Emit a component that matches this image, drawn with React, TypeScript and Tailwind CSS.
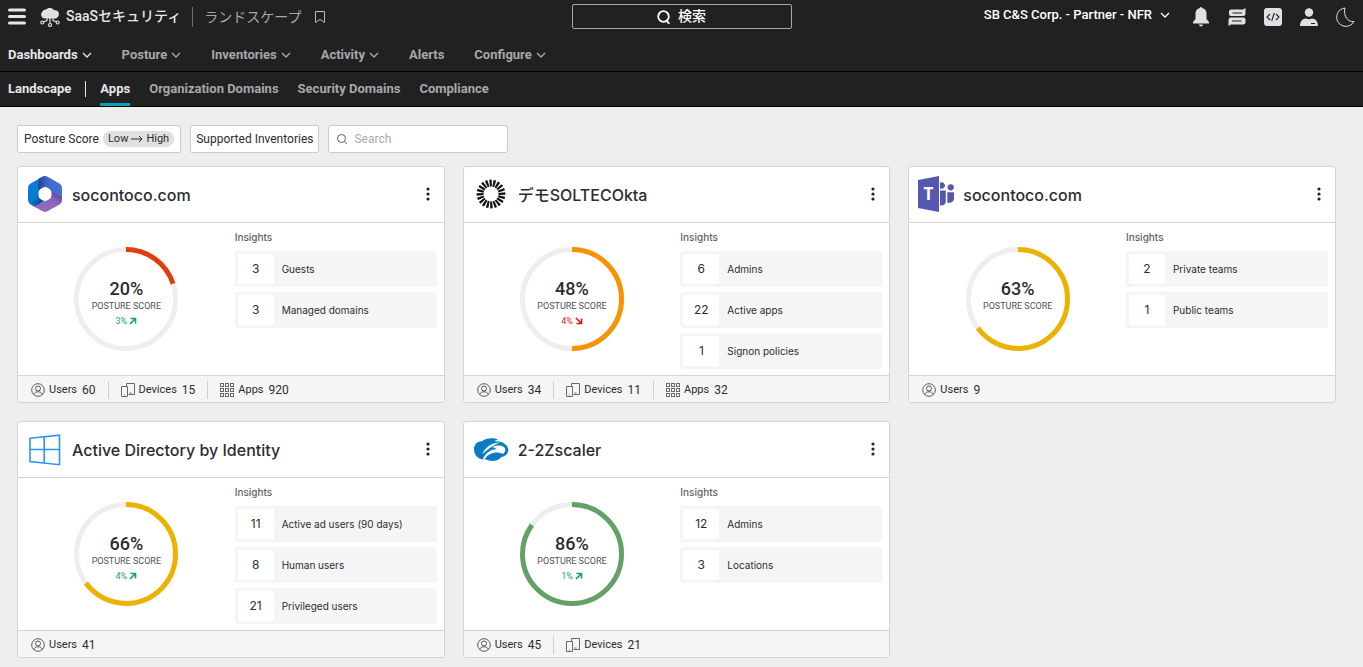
import React from "react";

type Insight = { value: number; label: string };
type Trend = { value: string; up: boolean };
type Stat = { kind: "Users" | "Devices" | "Apps"; value: number };
type CardData = {
  title: string;
  logo: React.ReactNode;
  score: number;
  color: string;
  trend?: Trend;
  insights: Insight[];
  stats: Stat[];
};

const M365Logo = () => (
  <svg viewBox="0 0 36 36" className="size-9">
    <defs>
      <clipPath id="hex">
        <path d="M15 .9c2-1.100 4-1.100 6 0L32 7.200c2 1.100 3 2.800 3 5v11.600c0 2.200-1 3.900-3 5L21 35.100c-2 1.100-4 1.100-6 0L4 28.800c-2-1.100-3-2.800-3-5V12.200c0-2.200 1-3.900 3-5z" />
      </clipPath>
      <linearGradient id="left" x1="0.7" y1="1" x2="0.3" y2="0.4">
        <stop offset="0" stopColor="#0c3f83" />
        <stop offset="0.6" stopColor="#0a78d4" />
        <stop offset="1" stopColor="#0a7bdb" />
      </linearGradient>
      <linearGradient id="top" x1="0" y1="0" x2="1" y2="0">
        <stop offset="0" stopColor="#263f88" />
        <stop offset="0.35" stopColor="#3f68cf" />
        <stop offset="1" stopColor="#4870d6" />
      </linearGradient>
      <linearGradient id="bottom" x1="1" y1="0" x2="0.4" y2="0.6">
        <stop offset="0" stopColor="#4f3383" />
        <stop offset="0.6" stopColor="#8a62b8" />
        <stop offset="1" stopColor="#9168c0" />
      </linearGradient>
    </defs>
    <g clipPath="url(#hex)">
      <path d="M0 0h18v24L8 32H0z" fill="url(#left)" />
      <path d="M11.500 0H36v23l-12-7-6-5-6.500 4z" fill="url(#top)" />
      <path d="M24 15.500l12 6V36H4v-6.500c3 .8 5 .2 7-1l13-7.500z" fill="url(#bottom)" />
    </g>
    <path d="M15.500 11.800c1.800-1 3.200-1 5 0l1.500.9c1.700 1 2.500 2.200 2.500 4.200v2.200c0 2-.8 3.200-2.500 4.200l-1.500.9c-1.800 1-3.200 1-5 0l-1.500-.9c-1.700-1-2.500-2.200-2.500-4.200v-2.200c0-2 .8-3.200 2.500-4.200z" fill="#fff" />
  </svg>
);

const OktaLogo = () => (
  <svg viewBox="-18 -18 36 36" className="size-9">
    {Array.from({ length: 20 }, (_, i) => (
      <path key={i} d="M-1 -7.500L-1.800 -14.200L0.700 -14.500L0.900 -7.500Z" fill="#111" transform={`rotate(${i * 18})`} />
    ))}
  </svg>
);

const TeamsLogo = () => (
  <svg viewBox="0 0 36 36" className="size-9">
    <g fill="#5558af">
      <path d="M0 4L21 0v36L0 32z" />
      <path d="M22 6.800a3.200 3.200 0 1 1 0 5.400z" />
      <circle cx="32.700" cy="11.300" r="3.100" />
      <path d="M22 14.500h5.800v11c0 2.500-2 4.200-5.800 4z" />
      <path d="M29.300 16.300H36v6c0 3-2.500 5-6.700 4.500z" />
    </g>
    <text x="10.500" y="23.500" textAnchor="middle" fontSize="17" fontWeight="700" fill="#fff" fontFamily="Open Sans, sans-serif">T</text>
  </svg>
);

const WindowsLogo = () => (
  <svg viewBox="0 0 36 36" className="size-9" fill="none" stroke="#2797f3" strokeWidth="1.600">
    <path d="M3 7.200L32.500 4.200v29.500L3 30.500zM17.200 5.800v26.200M3 18.500h29.500" />
  </svg>
);

const ZscalerLogo = () => (
  <svg viewBox="51 48 108 108" className="size-9">
    <path d="M54 106C52 90 64 78 78 79C88 69 112 67 126 73L114 79C138 76 157 90 157 105C157 116 148 124 136 126C128 139 102 141 90 133C68 136 56 122 54 106Z" fill="#0a7bc4" />
    <path d="M79 118C86 98 106 84 132 82C114 90 98 100 79 118Z" fill="#fff" />
    <path d="M80 133C90 112 104 103 122 103C116 98 112 97 108 97C122 88 146 90 148 104C148 109 145 113 141 117C124 108 98 112 86 133Z" fill="#fff" />
  </svg>
);

const cards: CardData[] = [
  {
    title: "socontoco.com", logo: <M365Logo />, score: 20, color: "#e23e0d", trend: { value: "3%", up: true },
    insights: [{ value: 3, label: "Guests" }, { value: 3, label: "Managed domains" }],
    stats: [{ kind: "Users", value: 60 }, { kind: "Devices", value: 15 }, { kind: "Apps", value: 920 }],
  },
  {
    title: "デモSOLTECOkta", logo: <OktaLogo />, score: 48, color: "#fb9200", trend: { value: "4%", up: false },
    insights: [{ value: 6, label: "Admins" }, { value: 22, label: "Active apps" }, { value: 1, label: "Signon policies" }],
    stats: [{ kind: "Users", value: 34 }, { kind: "Devices", value: 11 }, { kind: "Apps", value: 32 }],
  },
  {
    title: "socontoco.com", logo: <TeamsLogo />, score: 63, color: "#edb200",
    insights: [{ value: 2, label: "Private teams" }, { value: 1, label: "Public teams" }],
    stats: [{ kind: "Users", value: 9 }],
  },
  {
    title: "Active Directory by Identity", logo: <WindowsLogo />, score: 66, color: "#edb200", trend: { value: "4%", up: true },
    insights: [{ value: 11, label: "Active ad users (90 days)" }, { value: 8, label: "Human users" }, { value: 21, label: "Privileged users" }],
    stats: [{ kind: "Users", value: 41 }],
  },
  {
    title: "2-2Zscaler", logo: <ZscalerLogo />, score: 86, color: "#64a166", trend: { value: "1%", up: true },
    insights: [{ value: 12, label: "Admins" }, { value: 3, label: "Locations" }],
    stats: [{ kind: "Users", value: 45 }, { kind: "Devices", value: 21 }],
  },
];

const Chevron = () => (
  <svg viewBox="0 0 10 10" className="size-[10px]" fill="none" stroke="currentColor" strokeWidth="1.300">
    <path d="M1 3l4 4 4-4" />
  </svg>
);

const StatIcon = ({ kind }: { kind: Stat["kind"] }) => {
  if (kind === "Users")
    return (
      <svg viewBox="0 0 14 14" className="size-[14px]" fill="none" stroke="#55585c" strokeWidth="1">
        <circle cx="7" cy="7" r="6.300" />
        <circle cx="7" cy="5.500" r="2.500" />
        <path d="M2.800 11.500c.5-2 2-2.700 4.200-2.700s3.700.7 4.200 2.700" />
      </svg>
    );
  if (kind === "Devices")
    return (
      <svg viewBox="0 0 14 14" className="size-[14px]" fill="none" stroke="#66696d" strokeWidth="1">
        <path d="M5.500 3V.5h8v11H7.500M.5 3.500h6v10h-6zM3 12h1M8.500 10h2" />
      </svg>
    );
  return (
    <svg viewBox="0 0 14 14" className="size-[14px]" fill="none" stroke="#66696d" strokeWidth="1">
      {[0.5, 5.5, 10.5].map((y) => [0.5, 5.5, 10.5].map((x) => <rect key={`${x}-${y}`} x={x} y={y} width="3" height="3" />))}
    </svg>
  );
};

const Ring = ({ score, color, trend }: { score: number; color: string; trend?: Trend }) => {
  const filled = Math.round(score / 5) * 5;
  return (
    <div className="grid size-[104px] place-items-center">
      <svg viewBox="0 0 104 104" className="col-start-1 row-start-1 size-[104px]" fill="none" strokeWidth="5">
        <circle cx="52" cy="52" r="49.500" stroke="#eeeeee" />
        <circle cx="52" cy="52" r="49.500" stroke={color} pathLength="100" strokeDasharray={`${filled} 100`} transform="rotate(-90 52 52)" />
      </svg>
      <div className="col-start-1 row-start-1 flex h-[46px] flex-col items-center pt-[3px] font-['Roboto',sans-serif]">
        <span className="text-[18px] leading-5 font-medium text-[#2b2d30]">{score}%</span>
        <span className="text-[9px] leading-[14px] whitespace-nowrap text-[#4f5256]">POSTURE SCORE</span>
        {trend && (
          <span className={trend.up ? "flex items-center gap-[2px] text-[9px] leading-4 text-[#16a45c]" : "flex items-center gap-[2px] text-[9px] leading-4 text-[#d9190f]"}>
            {trend.value}
            <svg viewBox="0 0 8 8" className="size-2" fill="none" stroke="currentColor" strokeWidth="1.600">
              {trend.up ? <path d="M1.500 1.500h5v5M6.500 1.500l-5.500 5.500" /> : <path d="M1.500 6.500h5v-5M6.500 6.500l-5.500-5.500" />}
            </svg>
          </span>
        )}
      </div>
    </div>
  );
};

const Card = ({ card }: { card: CardData }) => (
  <article className="flex flex-col overflow-hidden rounded-[3px] border border-[#d4d4d4] bg-white">
    <header className="flex h-14 items-center border-b border-[#d4d4d4] pr-[9px] pb-[2px] pl-[9px]">
      {card.logo}
      <h2 className="ml-[9px] flex-1 pt-[3px] text-[16px] leading-6 font-medium text-[#2b2d30]">{card.title}</h2>
      <button aria-label="Card menu" className="flex h-6 w-[14px] items-center justify-center">
        <svg viewBox="0 0 4 14" className="h-[14px] w-1" fill="#222">
          <circle cx="2" cy="2" r="1.600" />
          <circle cx="2" cy="7" r="1.600" />
          <circle cx="2" cy="12" r="1.600" />
        </svg>
      </button>
    </header>
    <div className="flex h-[152px]">
      <div className="flex flex-1 items-center justify-center">
        <Ring score={card.score} color={card.color} trend={card.trend} />
      </div>
      <div className="mr-[7px] w-[202px] pt-[7px]">
        <h3 className="text-[10px] leading-[14px] font-medium text-[#5f6266]">Insights</h3>
        <ul className="mt-[7px] flex flex-col gap-[5px]">
          {card.insights.map((it) => (
            <li key={it.label} className="flex h-9 items-center rounded-[3px] bg-[#f5f5f5] p-[3px]">
              <span className="flex h-[30px] w-9 items-center justify-center bg-white text-[12px] text-[#2b2d30]">{it.value}</span>
              <span className="ml-2 text-[10px] text-[#2b2d30]">{it.label}</span>
            </li>
          ))}
        </ul>
      </div>
    </div>
    <footer className="flex h-[27px] items-center border-t border-[#d4d4d4] bg-[#f5f5f5] pt-px pl-[13px] font-['Roboto',sans-serif] text-[#2b2d30]">
      {card.stats.map((s, i) => (
        <div key={s.kind} className={i > 0 ? "ml-3 flex h-[18px] items-center border-l border-[#cfcfcf] pl-3" : "flex h-[18px] items-center"}>
          <StatIcon kind={s.kind} />
          <span className="ml-1 text-[11px] leading-4">{s.kind}</span>
          <span className="ml-[5px] text-[12px] leading-4">{s.value}</span>
        </div>
      ))}
    </footer>
  </article>
);

const nav = [
  { label: "Dashboards", menu: true }, { label: "Posture", menu: true }, { label: "Inventories", menu: true },
  { label: "Activity", menu: true }, { label: "Alerts", menu: false }, { label: "Configure", menu: true },
];

const subnav = ["Apps", "Organization Domains", "Security Domains", "Compliance"];

export default function App() {
  return (
    <div className="min-h-screen bg-[#eeeeee] font-['Inter','Noto_Sans_CJK_JP',sans-serif]">
      <div className="bg-[#212121] font-['Roboto','Noto_Sans_CJK_JP',sans-serif] text-[#a5a8ac]">
        <header className="grid h-9 grid-cols-[1fr_220px_1fr] items-center pb-[3px] text-[14px] font-medium">
          <div className="flex items-center pl-2">
            <button aria-label="Menu">
              <svg viewBox="0 0 18 17" className="h-[17px] w-[18px]" stroke="#e6e6e8" strokeWidth="3.200" strokeLinecap="round">
                <path d="M1.600 2h14.800M1.600 8.500h14.800M1.600 15h14.800" />
              </svg>
            </button>
            <svg viewBox="0 0 20 20" className="ml-[14px] size-5" fill="none" stroke="#e0e0e4" strokeWidth="1.200">
              <path d="M4.500 11.500A4 4 0 0 1 2.500 4.500 C3 3 5 2.500 6 2.500 C7.500.5 12 0 14 3 C18 3 20 6 18.500 9 C17.500 11 16 11.500 15 11.500z" fill="#e0e0e4" stroke="none" />
              <path d="M10 11v5.500M7 11v2.500l-4 1.500M13 11v2.500l4 1.500" />
              <circle cx="10" cy="18" r="1.500" />
              <circle cx="2.300" cy="15.500" r="1.500" />
              <circle cx="17.700" cy="15.500" r="1.500" />
            </svg>
            <span className="ml-[6px] whitespace-nowrap text-[#e6e6e8]">SaaSセキュリティ</span>
            <span className="ml-[11px] border-l border-[#6c6c6c] pl-[11px] leading-5 font-normal whitespace-nowrap">ランドスケープ</span>
            <button aria-label="Bookmark" className="ml-[14px]">
              <svg viewBox="0 0 10 12" className="h-3 w-[10px]" fill="none" stroke="#b8babd">
                <path d="M.5.500h9v11L5 8.500.5 11.500z" />
              </svg>
            </button>
          </div>
          <button className="flex h-[25px] items-center justify-center gap-[7px] rounded-[2px] border border-[#a8a8a8] text-white">
            <svg viewBox="0 0 14 14" className="size-[14px]" fill="none" stroke="currentColor" strokeWidth="1.800">
              <circle cx="6.500" cy="6.500" r="5.300" />
              <path d="M9 10l3.300 3.800" />
            </svg>
            検索
          </button>
          <div className="flex items-center justify-end pr-2 text-[#e0e0e4]">
            <button className="flex items-center gap-2 pb-[3px] text-[13px] text-white">
              SB C&amp;S Corp. - Partner - NFR
              <Chevron />
            </button>
            <div className="ml-[21px] flex items-center gap-4">
              <button aria-label="Notifications">
                <svg viewBox="0 0 20 20" className="size-5" fill="currentColor">
                  <path d="M9 1a1 1 0 0 1 2 0c3 .5 4.500 2.800 4.500 5.500V12l2.500 3v1.500H2V15l2.500-3V6.500C4.500 3.800 6 1.500 9 1zM8 17.500h4a2 2 0 0 1-4 0z" />
                </svg>
              </button>
              <button aria-label="Messages">
                <svg viewBox="0 0 20 20" className="size-5" fill="currentColor">
                  <path d="M4 2.500h12L18.500 1v5.500a2.500 2.500 0 0 1-2.500 2.500H4a2 2 0 0 1-2-2V4.500a2 2 0 0 1 2-2zM4 10.500h12.500a2 2 0 0 1 2 2v3a2 2 0 0 1-2 2H4L1.500 19v-6a2.500 2.500 0 0 1 2.500-2.500z" />
                  <path d="M5.500 6h9.500M5 14h9.500" stroke="#212121" strokeWidth="1" />
                </svg>
              </button>
              <button aria-label="API">
                <svg viewBox="0 0 20 20" className="size-5">
                  <rect x="1" y="1" width="18" height="18" rx="3" fill="currentColor" />
                  <path d="M7 7l-3 3 3 3M13 7l3 3-3 3M11.300 6l-2.600 8" fill="none" stroke="#212121" strokeWidth="1.100" />
                </svg>
              </button>
              <button aria-label="Account">
                <svg viewBox="0 0 20 20" className="size-5" fill="currentColor">
                  <circle cx="10" cy="5.500" r="4.200" />
                  <path d="M1 19c0-4.500 2.500-7.500 6-7.500q3 1.500 6 0c3.500 0 6 3 6 7.500z" />
                  <path d="M12 16.500h4" stroke="#212121" />
                </svg>
              </button>
              <button aria-label="Dark mode">
                <svg viewBox="0 0 20 20" className="size-5" fill="none" stroke="currentColor">
                  <path d="M10 1A9.200 9.200 0 1 0 19 14.500 C13 15.500 8 9 10 1z" />
                </svg>
              </button>
            </div>
          </div>
        </header>
        <nav className="flex h-[36px] items-center gap-[30px] border-b border-black pt-[2px] pl-2 text-[13px] font-bold">
          {nav.map((n, i) => (
            <a key={n.label} href="#" className={i === 0 ? "flex items-center gap-1 text-[#e6e6e8]" : "flex items-center gap-1"}>
              {n.label}
              {n.menu && <Chevron />}
            </a>
          ))}
        </nav>
        <nav className="flex h-[35px] items-center border-b border-black pl-2 text-[13px] font-bold">
          <a href="#" className="border-r border-[#e6e6e8] pr-[14px] leading-4 text-[#e6e6e8]">Landscape</a>
          <div className="ml-[14px] flex h-full items-center gap-[19px]">
            {subnav.map((n, i) => (
              <a key={n} href="#" className={i === 0 ? "flex h-full items-center border-b-3 border-[#069fbe] pt-[3px] text-[#e6e6e8]" : ""}>
                {n}
              </a>
            ))}
          </div>
        </nav>
      </div>
      <main className="pt-[18px] pr-[27px] pl-[17px]">
        <div className="flex h-7 gap-[9px] font-['Roboto',sans-serif] text-[12px] text-[#2b2d30]">
          <button className="flex items-center rounded-[2px] border border-[#cbcbcb] bg-white px-[6px]">
            Posture Score
            <span className="ml-1 flex h-4 items-center rounded-full bg-[#e0e0e0] px-[5px] text-[11px]">
              Low
              <svg viewBox="0 0 12 8" className="mx-[3px] h-2 w-3" fill="none" stroke="currentColor">
                <path d="M0 4h11M8 1l3 3-3 3" />
              </svg>
              High
            </span>
          </button>
          <button className="rounded-[2px] border border-[#cbcbcb] bg-white px-[5px]">Supported Inventories</button>
          <label className="flex w-[180px] items-center rounded-[3px] border border-[#cbcbcb] bg-white px-2">
            <svg viewBox="0 0 10 10" className="size-[10px] shrink-0" fill="none" stroke="#55585c">
              <circle cx="4.500" cy="4.500" r="4" />
              <path d="M7.300 7.300L9.800 9.800" />
            </svg>
            <input aria-label="Search" placeholder="Search" className="ml-[7px] w-full min-w-0 outline-none placeholder:text-[#a9abae]" />
          </label>
        </div>
        <div className="mt-[13px] grid grid-cols-3 gap-[18px] pb-2">
          {cards.map((c, i) => (
            <Card key={i} card={c} />
          ))}
        </div>
      </main>
    </div>
  );
}
